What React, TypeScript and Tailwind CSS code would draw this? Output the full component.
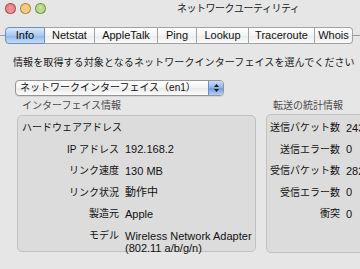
import React from 'react';

const tabs = [
  { name: 'Info', w: 'w-[40px]' },
  { name: 'Netstat', w: 'w-[50px]' },
  { name: 'AppleTalk', w: 'w-[63px]' },
  { name: 'Ping', w: 'w-[39px]' },
  { name: 'Lookup', w: 'w-[52px]' },
  { name: 'Traceroute', w: 'w-[66px]' },
  { name: 'Whois', w: 'w-[38px]' },
];

const ifaceRows = [
  { label: 'IP アドレス', value: '192.168.2' },
  { label: 'リンク速度', value: '130 MB' },
  { label: 'リンク状況', value: '動作中' },
  { label: '製造元', value: 'Apple' },
];

const statRows = [
  { label: '送信パケット数', value: '243' },
  { label: '送信エラー数', value: '0' },
  { label: '受信パケット数', value: '282' },
  { label: '受信エラー数', value: '0' },
  { label: '衝突', value: '0' },
];

const font = "font-['Liberation_Sans','Noto_Sans_CJK_JP',sans-serif]";

const Light = ({ color }: { color: string }) => (
  <span
    className={`h-[11px] w-[11px] rounded-full border border-black/25 shadow-[inset_0_-2px_3px_rgba(255,255,255,0.5)] ${color}`}
  />
);

const TitleBar = () => (
  <div className="flex h-[17px] items-center">
    <div className="ml-[5px] flex gap-[4px]">
      <Light color="bg-[radial-gradient(circle_at_50%_35%,#f7a0a0,#d8323a)]" />
      <Light color="bg-[radial-gradient(circle_at_50%_35%,#fcd894,#e89a1c)]" />
      <Light color="bg-[radial-gradient(circle_at_50%_35%,#d3efa1,#6fae2e)]" />
    </div>
    <span className="ml-[131px] text-[10px] tracking-[-0.5px] text-[#1a1a1a]">
      ネットワークユーティリティ
    </span>
  </div>
);

const Tabs = () => (
  <div className="mt-[10px] flex h-[17px] items-center">
    <div className="h-px w-[5px] bg-[#9a9a9a]" />
    <div className="flex h-full">
      {tabs.map((t, i) => {
        const active = i === 0;
        return (
          <div
            key={t.name}
            className={`flex ${t.w} h-full items-center justify-center border-y border-r text-[11px] ${
              i === 0 ? 'rounded-l-[4px] border-l' : ''
            } ${i === tabs.length - 1 ? 'rounded-r-[4px]' : ''} ${
              active
                ? 'border-[#6e8fb8] bg-[linear-gradient(#dbe9fb,#a8c8ef_50%,#8fb7ea_51%,#c4dcf8)] text-[#0a0a0a]'
                : 'border-[#a3a3a3] bg-[linear-gradient(#ffffff,#f4f4f4_50%,#ebebeb_51%,#fafafa)] text-[#111]'
            }`}
          >
            {t.name}
          </div>
        );
      })}
    </div>
    <div className="h-px flex-1 bg-[#9a9a9a]" />
  </div>
);

const Popup = () => (
  <div className="ml-[15px] mt-[10px] flex h-[16px] w-[209px] overflow-hidden rounded-[4px] border border-[#959595] bg-[linear-gradient(#ffffff,#f3f3f3_50%,#e9e9e9_51%,#fbfbfb)] shadow-[0_1px_0_rgba(0,0,0,0.08)]">
    <span className="flex flex-1 items-center pl-[4px] text-[10px] leading-none text-[#111]">
      ネットワークインターフェイス（en1）
    </span>
    <span className="flex w-[15px] flex-col items-center justify-center gap-[2px] border-l border-[#6c8fc0] bg-[linear-gradient(#c9dcf6,#8db3e8_50%,#6d9de0_51%,#b4d0f4)]">
      <svg width="5" height="3" viewBox="0 0 5 3">
        <path d="M0 3 L2.5 0 L5 3 Z" fill="#1b1b1b" />
      </svg>
      <svg width="5" height="3" viewBox="0 0 5 3">
        <path d="M0 0 L2.5 3 L5 0 Z" fill="#1b1b1b" />
      </svg>
    </span>
  </div>
);

const Row = ({ label, value, labelW }: { label: string; value: string; labelW: string }) => (
  <div className="flex h-[21.5px] items-center">
    <span className={`${labelW} shrink-0 text-right text-[10px] text-[#111]`}>{label}</span>
    <span className="ml-[6px] whitespace-nowrap text-[11px] text-[#111]">{value}</span>
  </div>
);

export default function App() {
  return (
    <div className={`h-[269px] w-[360px] overflow-hidden bg-[#e6e6e6] ${font}`}>
      <TitleBar />
      <Tabs />
      <p className="ml-[13px] mt-[12px] h-[14px] whitespace-nowrap text-[10px] leading-[14px] tracking-[0.1px] text-[#1a1a1a]">
        情報を取得する対象となるネットワークインターフェイスを選んでください
      </p>
      <Popup />
      <div className="mt-[3px] flex">
        <section className="ml-[17px] w-[239px] shrink-0">
          <h3 className="ml-[5px] h-[14px] text-[10px] leading-[14px] text-[#4d4d4d]">インターフェイス情報</h3>
          <div className="mt-[2px] h-[137px] rounded-[5px] border border-[#c2c2c2] bg-[#dcdcdc] pt-px">
            <div className="flex h-[21.5px] items-center pl-[4px] text-[10px] text-[#111]">ハードウェアアドレス</div>
            {ifaceRows.map((r) => (
              <Row key={r.label} label={r.label} value={r.value} labelW="w-[101px]" />
            ))}
            <div className="mt-[5px] flex">
              <span className="w-[101px] shrink-0 text-right text-[10px] leading-[12px] text-[#111]">モデル</span>
              <span className="ml-[6px] text-[11px] leading-[12px] text-[#111]">
                Wireless Network Adapter
                <br />
                (802.11 a/b/g/n)
              </span>
            </div>
          </div>
        </section>
        <section className="ml-[10px] w-[120px] shrink-0">
          <h3 className="ml-[7px] h-[14px] text-[10px] leading-[14px] text-[#4d4d4d]">転送の統計情報</h3>
          <div className="mt-[1px] h-[139px] rounded-[5px] border border-[#c2c2c2] bg-[#dcdcdc] pt-[2px]">
            {statRows.map((r) => (
              <Row key={r.label} label={r.label} value={r.value} labelW="w-[73px]" />
            ))}
          </div>
        </section>
      </div>
    </div>
  );
}
